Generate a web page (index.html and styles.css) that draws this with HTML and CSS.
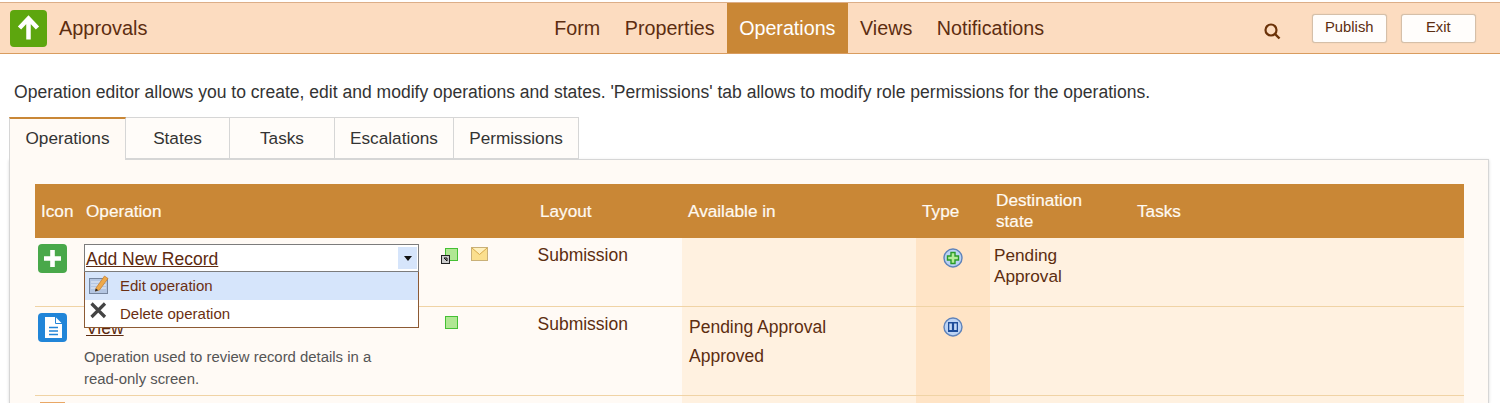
FILE: index.html
```html
<!DOCTYPE html>
<html lang="en">
<head>
<meta charset="utf-8">
<title>Approvals</title>
<link rel="stylesheet" href="styles.css">
</head>
<body>
<header class="topbar">
  <div class="brand">
    <span class="app-icon"><svg width="37" height="37" viewBox="0 0 37 37"><path d="M18.500 29.500V9.500M9.500 18L18.500 8.500l9 9.500" fill="none" stroke="#fff" stroke-width="4.500"/></svg></span>
    <span class="app-name">Approvals</span>
  </div>
  <nav class="nav">
    <a class="nav-item">Form</a>
    <a class="nav-item">Properties</a>
    <a class="nav-item active">Operations</a>
    <a class="nav-item">Views</a>
    <a class="nav-item">Notifications</a>
  </nav>
  <div class="actions">
    <svg class="search" width="18" height="18" viewBox="0 0 18 18"><circle cx="8" cy="8" r="5.500" fill="none" stroke="#6b3208" stroke-width="2.200"/><path d="M12 12l4.500 4.500" stroke="#6b3208" stroke-width="2.400"/></svg>
    <button class="btn">Publish</button>
    <button class="btn btn-exit">Exit</button>
  </div>
</header>
<p class="intro">Operation editor allows you to create, edit and modify operations and states. 'Permissions' tab allows to modify role permissions for the operations.</p>
<div class="tabs">
  <div class="tab tab-on">Operations</div>
  <div class="tab tab-states">States</div>
  <div class="tab tab-tasks">Tasks</div>
  <div class="tab tab-esc">Escalations</div>
  <div class="tab tab-perm">Permissions</div>
</div>
<section class="panel">
  <div class="grid head">
    <div class="h h-icon">Icon</div>
    <div class="h h-op">Operation</div>
    <div class="h"></div>
    <div class="h">Layout</div>
    <div class="h h-avail">Available in</div>
    <div class="h h-type">Type</div>
    <div class="h h-dest">Destination state</div>
    <div class="h">Tasks</div>
  </div>
  <div class="grid row row-one">
    <div class="c c-icon"><span class="op-icon green"><svg width="29" height="29" viewBox="0 0 29 29"><path d="M14.500 6v17M6 14.500h17" stroke="#fff" stroke-width="4.600"/></svg></span></div>
    <div class="c c-op">
      <div class="combo">
        <div class="combo-field"><a class="combo-text">Add New Record</a><span class="combo-arrow"><svg width="8" height="5" viewBox="0 0 8 5"><path d="M0 0h8L4 5z" fill="#111"/></svg></span></div>
        <ul class="menu">
          <li class="menu-item hover">
            <svg class="menu-ico" width="21" height="22" viewBox="0 0 21 22"><rect x="1.500" y="5.500" width="18" height="15" fill="#b4c6e2" stroke="#76869f"/><path d="M3 9h15M3 12h15M3 15h15" stroke="#e8eef8"/><path d="M8 15L16.500 3 20 5.500 11.500 17 7.500 18z" fill="#eea94a" stroke="#c17a2a" stroke-width=".7"/><path d="M7 18.500l.800-3 2.500 1.800z" fill="#222"/></svg>
            Edit operation</li>
          <li class="menu-item">
            <svg class="menu-ico" width="21" height="22" viewBox="0 0 21 22"><path d="M3.500 3.500L17 17M17 3.500L3.500 17" stroke="#444" stroke-width="3.200"/></svg>
            Delete operation</li>
        </ul>
      </div>
    </div>
    <div class="c c-flags">
      <span class="flag-box"><span class="flag"></span><svg class="flag-link" width="9" height="9" viewBox="0 0 9 9"><rect x=".5" y=".5" width="8" height="8" fill="#ccc" stroke="#222"/><path d="M3 3h3v3M6 6L3 3" stroke="#111" fill="none"/></svg></span>
      <svg class="mail" width="17" height="14" viewBox="0 0 17 14"><rect x=".5" y=".5" width="16" height="13" fill="#fbdf8e" stroke="#c9b078"/><path d="M1 1l7.500 6.500L16 1" fill="#fff0bd" stroke="#d8a94a"/></svg>
    </div>
    <div class="c c-text">Submission</div>
    <div class="c c-avail"></div>
    <div class="c c-type"><svg class="type-ico" width="20" height="20" viewBox="0 0 20 20"><circle cx="10" cy="10" r="9" fill="#bcd3f4" stroke="#5f83ba" stroke-width="1.400"/><path d="M8 4.500h4V8h3.500v4H12v3.500H8V12H4.500V8H8z" fill="#b5ec9a" stroke="#2a9a28" stroke-width="1.400"/></svg></div>
    <div class="c c-dest">Pending<br>Approval</div>
    <div class="c c-tasks"></div>
  </div>
  <div class="grid row row-two">
    <div class="c c-icon"><span class="op-icon blue"><svg width="29" height="29" viewBox="0 0 29 29"><path d="M7 4h10.500L24 10.500V25H7z" fill="#fff"/><path d="M17.500 4v6.500H24" fill="none" stroke="#2185d8"/><path d="M11 14.500h9M11 18h9M11 21.500h9" stroke="#2185d8" stroke-width="1.300"/></svg></span></div>
    <div class="c c-op">
      <a class="op-link">View</a>
      <p class="op-desc">Operation used to review record details in a read-only screen.</p>
    </div>
    <div class="c c-flags"><span class="flag-box"><span class="flag"></span></span></div>
    <div class="c c-text">Submission</div>
    <div class="c c-avail"><div class="state">Pending Approval</div><div class="state">Approved</div></div>
    <div class="c c-type"><svg class="type-ico" width="20" height="20" viewBox="0 0 20 20"><circle cx="10" cy="10" r="9" fill="#bcd3f4" stroke="#5f83ba" stroke-width="1.400"/><rect x="5" y="5" width="10" height="10" fill="#1d4c9a"/><path d="M6.300 6.500h2.600v6.500H6.300zM11.100 6.500h2.600v6.500h-2.600z" fill="#c3d8f5"/></svg></div>
    <div class="c c-dest"></div>
    <div class="c c-tasks"></div>
  </div>
  <div class="grid row row-three">
    <div class="c c-icon"><span class="op-icon tan"></span></div>
    <div class="c c-op"></div>
    <div class="c c-flags"></div>
    <div class="c c-text"></div>
    <div class="c c-avail"></div>
    <div class="c c-type"></div>
    <div class="c c-dest"></div>
    <div class="c c-tasks"></div>
  </div>
</section>
</body>
</html>
```
FILE: styles.css
```css
* { box-sizing: border-box; }
html, body { margin: 0; height: 403px; overflow: hidden; }
body { background: #fff; font-family: "Liberation Sans", Arial, sans-serif; color: #5c2a10; padding-top: 2px; }
.topbar { height: 52px; background: #fcdcc0; border-top: 1px solid #dcae88; border-bottom: 1px solid #d99c5f; display: flex; align-items: stretch; }
.brand { display: flex; align-items: center; padding-left: 10px; width: 542px; }
.app-icon { width: 37px; height: 37px; background: #5da60e; border-radius: 4px; display: flex; align-items: center; justify-content: center; margin-right: 12px; }
.app-name { font-size: 19.900px; color: #5c2d10; }
.nav { display: flex; }
.nav-item { font-size: 19.700px; padding: 0 12.300px; display: flex; align-items: center; color: #5c2d10; }
.nav-item.active { background: #c98736; color: #fff; }
.actions { margin-left: auto; display: flex; align-items: center; padding-right: 24px; }
.search { margin-right: 31px; margin-top: 6px; }
.btn { width: 75.500px; height: 29px; padding: 0 0 3px; background: #fffdfb; border: 1px solid #d5bfa8; box-shadow: 0 0 1px #c9b49c; border-radius: 3px; font: 14.800px "Liberation Sans", Arial, sans-serif; color: #5c2d10; }
.btn-exit { margin-left: 13.500px; }
.intro { margin: 28px 0 0 14px; font-size: 17.550px; line-height: 20px; color: #333; white-space: nowrap; }
.tabs { display: flex; margin: 15px 0 0 9px; height: 42px; position: relative; z-index: 1; }
.tab { font-size: 17.200px; color: #333; display: flex; align-items: center; justify-content: center; background: #fffcf9; border: 1px solid #d6d6d6; border-left: 0; height: 42px; width: 105px; }
.tab-on { width: 117px; height: 43px; border-top: 2px solid #c98736; border-left: 1px solid #d6d6d6; border-bottom: 0; background: #fffaf5; padding-bottom: 2px; }
.tab-states { width: 104px; }
.tab-tasks { width: 105px; }
.tab-esc { width: 119px; }
.tab-perm { width: 125px; }
.panel { margin: 0 11px 0 9px; height: 244px; background: #fffaf5; border: 1px solid #d6d6d6; border-bottom: 0; box-shadow: 0 1px 3px rgba(0,0,0,.15); padding: 24px 24px 0 25px; }
.grid { display: grid; grid-template-columns: 48px 351px 102px 146px 234px 74px 143px 1fr; }
.head { background: #c98736; height: 54px; color: #fff; font-size: 17.200px; }
.h { padding: 17px 0 0 4px; line-height: 21px; color: #fffaf2; -webkit-text-stroke: .2px #fffaf2; }
.h-icon { padding-left: 6px; }
.h-op { padding-left: 3px; }
.h-avail { padding-left: 6px; }
.h-type { padding-left: 6px; }
.h-dest { padding: 6px 40px 0 6px; }
.row { border-bottom: 1px solid #f0d3a5; grid-template-rows: 100%; }
.row-one { height: 69px; }
.row-two { height: 89px; }
.row-three { height: 7px; border-bottom: 0; }
.c { font-size: 16px; line-height: 21px; color: #5c2d10; min-height: 0; }
.c-icon { padding: 6px 0 0 3px; }
.op-icon { display: flex; width: 29px; height: 29px; border-radius: 4px; align-items: center; justify-content: center; }
.green { background: #49a84a; }
.blue { background: #2185d8; }
.tan { background: #e9a765; width: 25px; margin-left: 2px; height: 1px; border-radius: 0; }
.c-op { padding: 6px 0 0 1px; position: relative; }
.combo { width: 335px; position: relative; z-index: 2; }
.combo-field { height: 28px; background: #fff; border: 1px solid #7c7c7c; display: flex; align-items: stretch; justify-content: space-between; padding: 2px 1px 2px 1px; }
.combo-text { font-size: 17.500px; line-height: 25px; color: #5c2a10; text-decoration: underline; }
.combo-arrow { width: 19px; background: #d6e5fb; display: flex; align-items: center; justify-content: center; }
.menu { list-style: none; margin: 0; padding: 0; background: #fff; border: 1px solid #8c5a34; border-top: 0; position: absolute; top: 100%; left: 0; right: 0; }
.menu-item { height: 27.500px; display: flex; align-items: center; font-size: 15px; color: #6b2f12; padding-left: 3px; }
.menu-item.hover { background: #d6e5fb; }
.menu-ico { margin-right: 11px; margin-top: -4px; }
.op-link { display: block; margin: 4px 0 0 2px; font-size: 17.500px; line-height: 22px; color: #5c2a10; text-decoration: underline; }
.op-desc { margin: 8px 0 0 0; width: 300px; font-size: 14.900px; line-height: 21.500px; color: #555; }
.c-flags { padding: 10px 0 0 11px; display: flex; align-items: flex-start; gap: 13px; }
.row-two .c-flags { padding-top: 9px; }
.flag-box { position: relative; display: block; width: 13px; height: 13px; }
.flag { display: block; width: 13px; height: 13px; background: #b0e793; border: 1px solid #45c034; }
.flag-link { position: absolute; left: -4px; top: 7px; }
.mail { margin-top: -1px; }
.c-text { padding: 7px 0 0 1.500px; font-size: 17.500px; }
.c-avail { background: #fff1e0; }
.row-two .c-avail { padding: 6px 0 0 7px; }
.state { font-size: 17.500px; line-height: 28.500px; }
.c-type { background: #ffe4c6; display: flex; justify-content: center; align-items: flex-start; padding: 10px 0 0 0; }
.c-dest, .c-tasks { background: #fff1e0; }
.row-one .c-dest { padding: 7px 0 0 4px; font-size: 17.200px; }
```
